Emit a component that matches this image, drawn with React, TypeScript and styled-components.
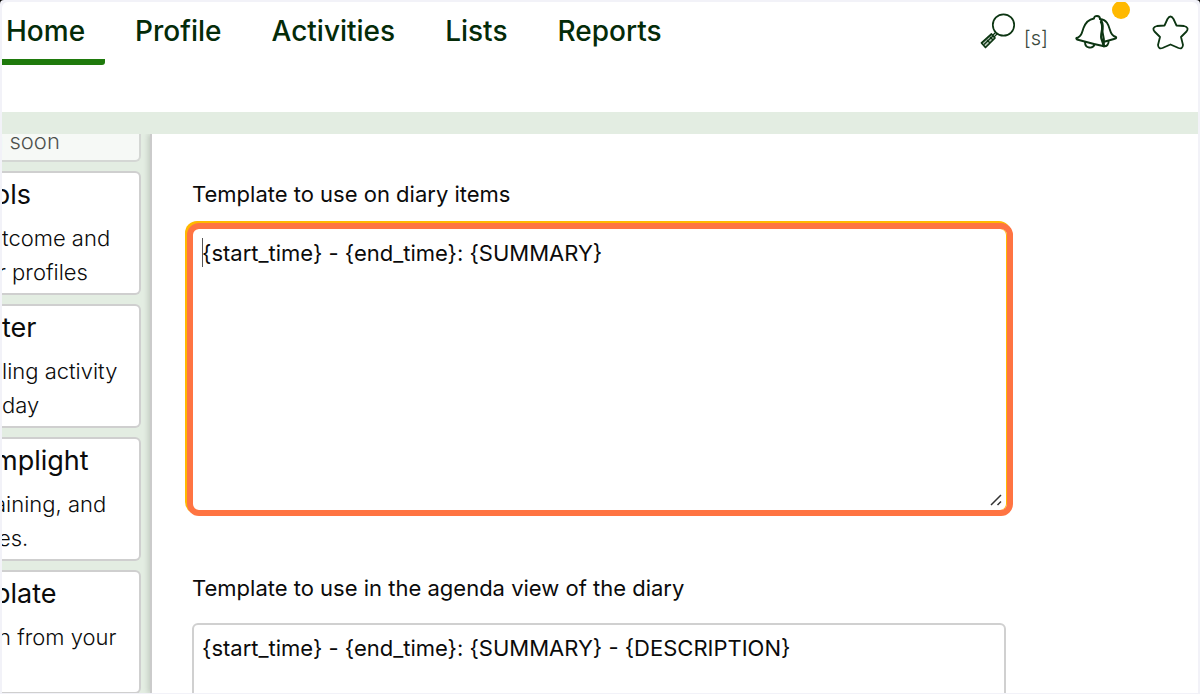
import React from "react";
import styled, { createGlobalStyle } from "styled-components";

const Global = createGlobalStyle`
  * { box-sizing: border-box; }
  html, body, #root { height: 100%; }
  body {
    margin: 0;
    background: #000;
    font-family: Inter, "Liberation Sans", sans-serif;
    font-size: 22px;
    color: #0b0b0b;
    overflow: hidden;
  }
`;

const Frame = styled.div`
  height: 100%;
  display: flex;
  flex-direction: column;
  border: 2px solid #f2f2f8;
  border-bottom-width: 1px;
  border-radius: 4px 4px 0 0;
  background: #f2f2f8;
  overflow: hidden;
`;

const Header = styled.header`
  flex: none;
  position: relative;
  z-index: 1;
  height: 132px;
  display: flex;
  justify-content: space-between;
  align-items: flex-start;
  background: #fff;
  border-bottom: 22px solid #e3ede2;
  border-radius: 6px 6px 0 0;
`;

const Nav = styled.nav`
  display: flex;
  gap: 10px;
`;

const NavLink = styled.a<{ $active?: boolean }>`
  height: 63px;
  padding: 12px 20px 0;
  line-height: 34px;
  font-size: 28px;
  font-weight: 500;
  color: #042b08;
  text-decoration: none;
  border-bottom: 6px solid ${(p) => (p.$active ? "#1f7a0c" : "transparent")};
  border-bottom-right-radius: 3px;
  &:first-child { padding-left: 4px; }
`;

const Tools = styled.div`
  display: flex;
  align-items: flex-start;
  padding: 10px 8px 0 0;
`;

const ToolButton = styled.button<{ $gap?: number }>`
  position: relative;
  display: flex;
  align-items: flex-end;
  gap: 8px;
  margin-left: ${(p) => p.$gap ?? 0}px;
  padding: 0;
  border: 0;
  background: none;
  font: inherit;
  font-size: 20px;
  font-weight: 300;
  color: #3c4a3e;
  line-height: 24px;
  svg { display: block; }
`;

const Dot = styled.span`
  position: absolute;
  right: -12px;
  top: -11px;
  width: 18px;
  height: 18px;
  border-radius: 50%;
  background: #ffb900;
`;

const Body = styled.div`
  flex: 1;
  min-height: 0;
  display: flex;
  background: #e3ede2;
`;

const Sidebar = styled.aside`
  flex: none;
  width: 148px;
  display: flex;
  flex-direction: column;
  gap: 9px;
  padding-right: 9px;
  overflow: hidden;
`;

const Card = styled.section<{ $muted?: boolean }>`
  flex: none;
  height: ${(p) => (p.$muted ? "28px" : "124px")};
  display: flex;
  flex-direction: column;
  justify-content: ${(p) => (p.$muted ? "flex-end" : "flex-start")};
  padding: ${(p) => (p.$muted ? "0 0 2px" : "4px 0")};
  background: #fff;
  border: 2px solid #cfcfcf;
  border-left: 0;
  border-top-width: ${(p) => (p.$muted ? 0 : "2px")};
  border-radius: ${(p) => (p.$muted ? "0 0 6px 0" : "0 6px 6px 0")};
  opacity: ${(p) => (p.$muted ? 0.7 : 1)};
  overflow: hidden;
`;

const CardTitle = styled.h2<{ $hang?: number }>`
  margin: 0 0 8px;
  text-indent: -${(p) => p.$hang ?? 0}px;
  font-size: 27px;
  font-weight: 400;
  line-height: 36px;
  white-space: nowrap;
`;

const CardLine = styled.p<{ $hang?: number }>`
  margin: 0;
  text-indent: -${(p) => p.$hang ?? 0}px;
  font-weight: 300;
  line-height: 34px;
  white-space: nowrap;
`;

const Panel = styled.main`
  flex: 1;
  min-width: 0;
  padding: 43px 192px 0 40px;
  background: #fff;
  border-left: 2px solid #cbcbcb;
  box-shadow: -2px 0 5px rgba(0, 0, 0, 0.14);
  overflow: hidden;
`;

const Field = styled.div`
  position: relative;
  display: flex;
  flex-direction: column;
  margin-bottom: 60px;
`;

const Label = styled.label`
  line-height: 34px;
  margin-bottom: 18px;
`;

const TextArea = styled.textarea<{ $focus?: boolean }>`
  display: block;
  height: 282px;
  padding: 6px 8px;
  resize: none;
  outline: 0;
  font: inherit;
  line-height: 34px;
  color: inherit;
  background: #fff;
  border: 2px solid #d0d0d0;
  border-radius: 6px;
  ${(p) =>
    p.$focus &&
    `
    height: 293px;
    margin: -6px -7px -5px -5px;
    padding: 7px 9px;
    border: 6px solid #ff7442;
    border-radius: 12px;
    box-shadow: -2px -2px 0 #ffb900, inset -1px 0 0 #ffb900;
  `}
`;

const Caret = styled.span`
  position: absolute;
  left: 10px;
  top: 61px;
  width: 1px;
  height: 29px;
  background: #555;
`;

const Grip = styled.svg`
  position: absolute;
  right: 4px;
  bottom: 5px;
`;

const SearchIcon = () => (
  <svg width="36" height="38" viewBox="0 0 36 38" fill="none" stroke="#0c3512" strokeWidth="1.7">
    <circle cx="23.5" cy="13" r="10.7" />
    <path d="M15.500 20.500 12.500 23.500M17 22 14 25" strokeWidth="1.3" />
    <path d="M1.500 31 11.500 22 15 26 5.500 35.500Z" fill="#b9c7ba" strokeLinejoin="round" />
    <path d="M4 32.500 13 24M7 28l3 3M10 25l3 3" strokeWidth="1.2" />
  </svg>
);

const BellIcon = () => (
  <svg width="44" height="38" viewBox="0 0 44 38" fill="none" stroke="#0c3512" strokeWidth="1.9" strokeLinecap="round" strokeLinejoin="round">
    <path d="M20 6.500C20 3 26 3 26 7 29 9 29 13 28.500 18 28 23 32 28 29 34L20 32 3 27.500Q1 26 4 25.500C8 24 8 20 9.500 16 11.500 10.500 14.500 7.500 20 6.500Z" />
    <path d="M26 7C33 7.500 34.500 13 36 18 37 22 38.500 24 42 25Q43 26.500 40 27L31 29.500" />
    <path d="M27 10C31 17 25 22 28 28L30 34" strokeWidth="2.400" />
    <path d="M11 30C11 37 19 37 20.500 32.500M29 34C33 35 35 32 34.500 29" />
  </svg>
);

const StarIcon = () => (
  <svg width="38" height="38" viewBox="0 0 38 38" fill="none" stroke="#0c3512" strokeWidth="1.8" strokeLinejoin="round">
    <path d="M15.500 7Q18.500 2 21.500 7L24.500 13.500 32 14Q37.500 15.500 34.500 19.500L29 25 31 33Q30.500 37.500 26.500 36L18.500 32.500 10.500 36Q6.500 37.500 6 33L8 25 2.500 19.500Q-0.500 15.500 5 14L12.500 13.500Z" />
  </svg>
);

type Line = { text: string; hang?: number };

const cards: { title: Line; lines: Line[] }[] = [
  { title: { text: "ols", hang: 8 }, lines: [{ text: "tcome and" }, { text: "r profiles", hang: 4 }] },
  { title: { text: "ter" }, lines: [{ text: "ling activity" }, { text: "day" }] },
  { title: { text: "mplight", hang: 8 }, lines: [{ text: "aining, and", hang: 8 }, { text: "es.", hang: 4 }] },
  { title: { text: "plate", hang: 8 }, lines: [{ text: "n from your", hang: 4 }] },
];

const links = ["Home", "Profile", "Activities", "Lists", "Reports"];

export default function App() {
  return (
    <>
      <Global />
      <Frame>
        <Header>
          <Nav>
            {links.map((name, i) => (
              <NavLink key={name} href="#" $active={i === 0}>
                {name}
              </NavLink>
            ))}
          </Nav>
          <Tools>
            <ToolButton aria-label="Search">
              <SearchIcon />
              [s]
            </ToolButton>
            <ToolButton aria-label="Notifications" $gap={26}>
              <BellIcon />
              <Dot />
            </ToolButton>
            <ToolButton aria-label="Favourites" $gap={34}>
              <StarIcon />
            </ToolButton>
          </Tools>
        </Header>
        <Body>
          <Sidebar>
            <Card $muted>
              <CardLine $hang={12}>g soon</CardLine>
            </Card>
            {cards.map((card) => (
              <Card key={card.title.text}>
                <CardTitle $hang={card.title.hang}>{card.title.text}</CardTitle>
                {card.lines.map((line) => (
                  <CardLine key={line.text} $hang={line.hang}>
                    {line.text}
                  </CardLine>
                ))}
              </Card>
            ))}
          </Sidebar>
          <Panel>
            <Field>
              <Label htmlFor="diary">Template to use on diary items</Label>
              <TextArea id="diary" $focus spellCheck={false} defaultValue="{start_time} - {end_time}: {SUMMARY}" />
              <Caret />
              <Grip width="12" height="12" viewBox="0 0 12 12" stroke="#333" strokeWidth="1.5">
                <path d="M1 11 11 1M7.500 11 11 7.500" />
              </Grip>
            </Field>
            <Field>
              <Label htmlFor="agenda">Template to use in the agenda view of the diary</Label>
              <TextArea
                id="agenda"
                spellCheck={false}
                defaultValue="{start_time} - {end_time}: {SUMMARY} - {DESCRIPTION}"
              />
            </Field>
          </Panel>
        </Body>
      </Frame>
    </>
  );
}
